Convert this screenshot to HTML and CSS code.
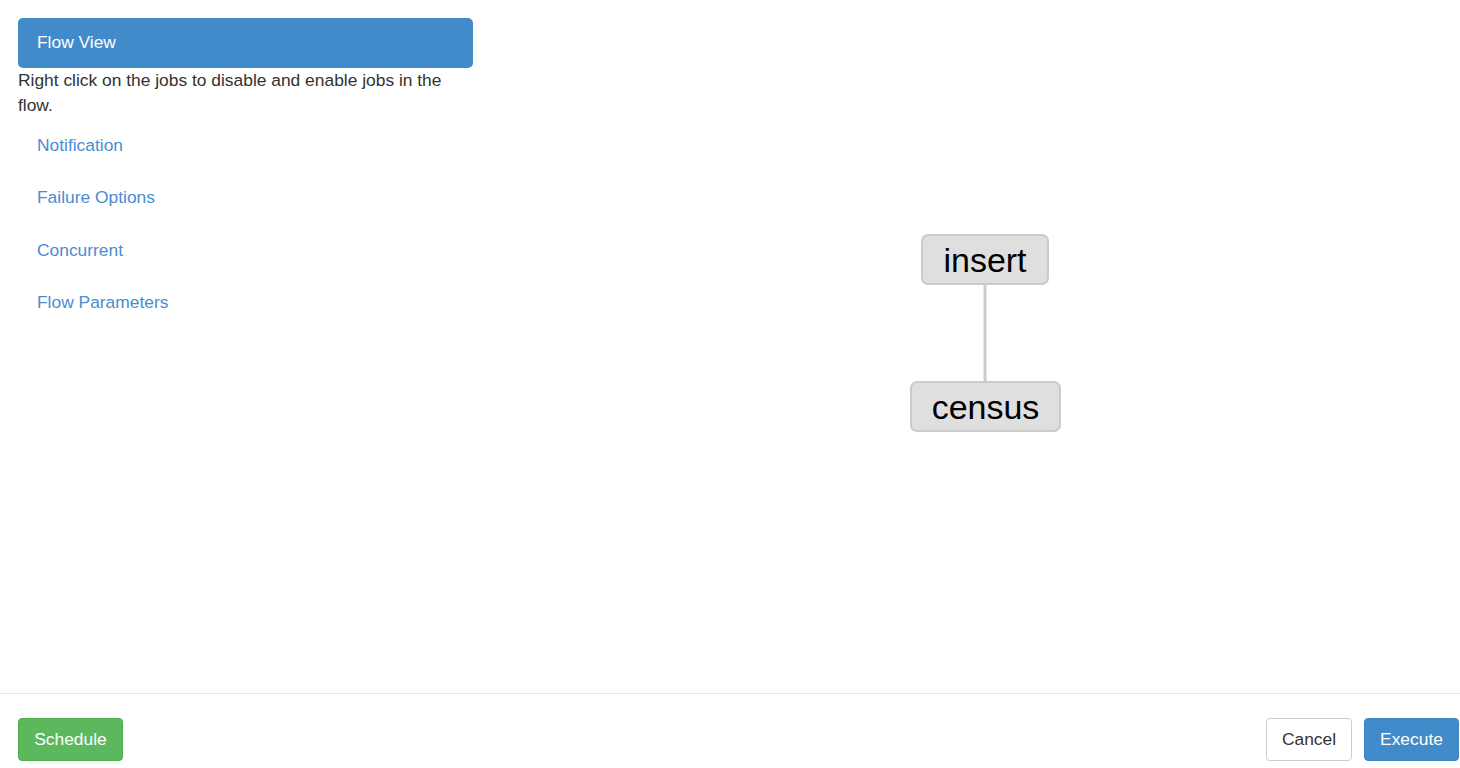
FILE: index.html
```html
<!DOCTYPE html>
<html>
<head>
<meta charset="utf-8">
<link rel="stylesheet" href="styles.css">
</head>
<body>
<div class="main">
  <aside class="side">
    <div class="side-head">Flow View</div>
    <p class="hint">Right click on the jobs to disable and enable jobs in the flow.</p>
    <ul class="menu">
      <li><a href="#">Notification</a></li>
      <li><a href="#">Failure Options</a></li>
      <li><a href="#">Concurrent</a></li>
      <li><a href="#">Flow Parameters</a></li>
    </ul>
  </aside>
  <section class="canvas">
    <svg class="edges" width="987" height="693">
      <line x1="512" y1="284" x2="512" y2="382" stroke="#cccccc" stroke-width="3"/>
    </svg>
    <div class="node node-insert">insert</div>
    <div class="node node-census">census</div>
  </section>
</div>
<footer class="foot">
  <button class="btn btn-green">Schedule</button>
  <div class="right">
    <button class="btn btn-white">Cancel</button>
    <button class="btn btn-blue">Execute</button>
  </div>
</footer>
</body>
</html>
```
FILE: styles.css
```css
html, body {
  margin: 0;
  padding: 0;
  background: #fff;
  font-family: "Liberation Sans", Arial, sans-serif;
  color: #333;
}
.main {
  display: flex;
  height: 693px;
  border-bottom: 1px solid #e5e5e5;
}
.side {
  width: 455px;
  margin-left: 18px;
  padding-top: 18px;
}
.side-head {
  background: #428bca;
  color: #fff;
  border-radius: 5px;
  height: 50px;
  line-height: 48px;
  padding-left: 19px;
  font-size: 17.4px;
}
.hint {
  margin: 0;
  font-size: 17.4px;
  line-height: 25px;
}
.menu {
  list-style: none;
  margin: 0;
  padding: 16px 0 0 19px;
}
.menu li {
  height: 52.3px;
  line-height: 22px;
}
.menu a {
  color: #4a8dd0;
  text-decoration: none;
  font-size: 17.4px;
}
.canvas {
  position: relative;
  flex: 1;
}
.edges {
  position: absolute;
  left: 0;
  top: 0;
}
.node {
  position: absolute;
  box-sizing: border-box;
  background: #dfdfdf;
  border: 2px solid #cbcbcb;
  border-radius: 7px;
  color: #000;
  font-size: 34px;
  text-align: center;
  height: 51px;
  line-height: 49px;
}
.node-insert {
  left: 448px;
  top: 234px;
  width: 128px;
}
.node-census {
  left: 437px;
  top: 381px;
  width: 151px;
}
.foot {
  display: flex;
  justify-content: space-between;
  padding: 24px 1px 0 18px;
}
.right {
  display: flex;
  gap: 12px;
}
.btn {
  font-family: "Liberation Sans", Arial, sans-serif;
  font-size: 17.4px;
  height: 43px;
  padding: 0;
  border-radius: 4px;
  border: 1px solid transparent;
  cursor: pointer;
}
.btn-green {
  background: #5cb85c;
  border-color: #4cae4c;
  color: #fff;
  width: 105px;
}
.btn-white {
  background: #fff;
  border-color: #ccc;
  color: #333;
  width: 86px;
}
.btn-blue {
  background: #428bca;
  border-color: #3d84c2;
  color: #fff;
  width: 95px;
}
```
